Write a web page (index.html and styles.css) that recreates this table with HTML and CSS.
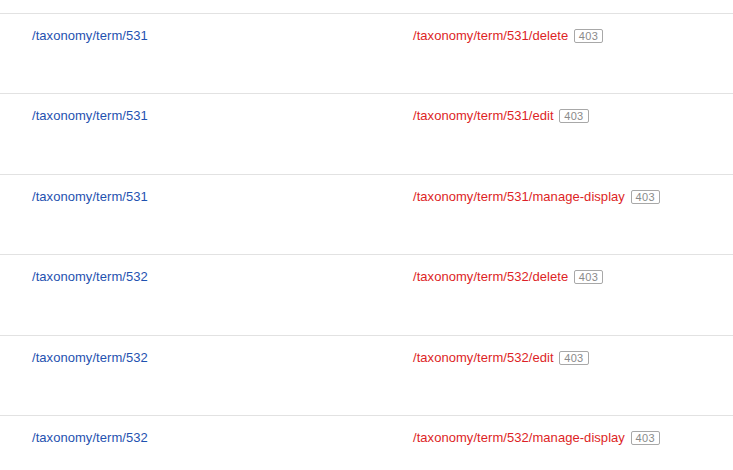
FILE: index.html
```html
<!DOCTYPE html>
<html lang="en">
<head>
  <meta charset="UTF-8" />
  <title>Access report</title>
  <link rel="stylesheet" href="styles.css">
</head>
<body>

<table class="report">
  <tbody>
    <tr>
      <td class="source"><a href="#">/taxonomy/term/531</a></td>
      <td class="target"><a href="#">/taxonomy/term/531/delete</a> <span class="code">403</span></td>
    </tr>
    <tr>
      <td class="source"><a href="#">/taxonomy/term/531</a></td>
      <td class="target"><a href="#">/taxonomy/term/531/edit</a> <span class="code">403</span></td>
    </tr>
    <tr>
      <td class="source"><a href="#">/taxonomy/term/531</a></td>
      <td class="target"><a href="#">/taxonomy/term/531/manage-display</a> <span class="code">403</span></td>
    </tr>
    <tr>
      <td class="source"><a href="#">/taxonomy/term/532</a></td>
      <td class="target"><a href="#">/taxonomy/term/532/delete</a> <span class="code">403</span></td>
    </tr>
    <tr>
      <td class="source"><a href="#">/taxonomy/term/532</a></td>
      <td class="target"><a href="#">/taxonomy/term/532/edit</a> <span class="code">403</span></td>
    </tr>
    <tr>
      <td class="source"><a href="#">/taxonomy/term/532</a></td>
      <td class="target"><a href="#">/taxonomy/term/532/manage-display</a> <span class="code">403</span></td>
    </tr>
  </tbody>
</table>

</body>
</html>
```

FILE: styles.css
```css
body {
  font-family: 'Liberation Sans', Arial, sans-serif;
  font-size: 13px;
  margin: 0; padding: 0;
  background-color: #fff;
  color: #333;
}
.report {
  width: 100%;
  border-collapse: collapse;
  margin-top: 13px;
}
.report td {
  border-top: 1px solid #e2e2e2;
  padding: 13px 0 0;
  height: 66.4px;
  line-height: 18px;
  vertical-align: top;
  text-align: left;
}
.report td.source {
  width: 381px;
  padding-left: 32px;
}
.report a {
  text-decoration: none;
  letter-spacing: 0.05px;
}
.source a {
  color: #1f52b0;
}
.target a {
  color: #dd1f26;
}
.code {
  display: inline-block;
  margin-left: 2px;
  padding: 0 4px;
  border: 1px solid #a8a8a8;
  border-radius: 2px;
  color: #8a8a8a;
  font-size: 11px;
  line-height: 12px;
  letter-spacing: 0.3px;
  vertical-align: 0;
}
```
